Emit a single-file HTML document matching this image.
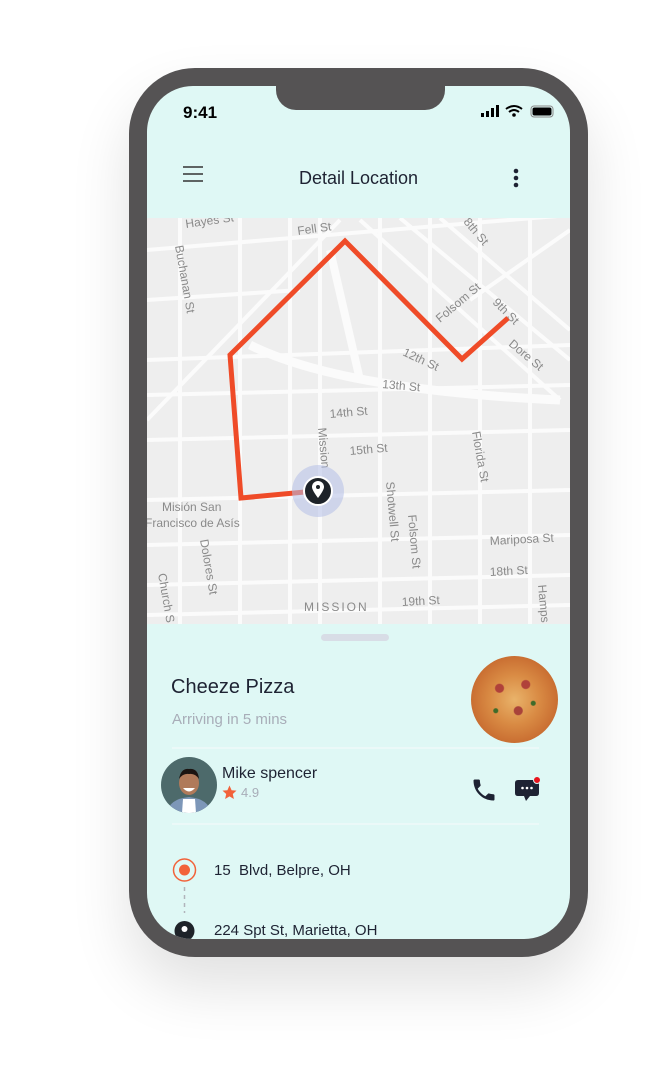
<!DOCTYPE html>
<html><head><meta charset="utf-8"><style>
*{margin:0;padding:0;box-sizing:border-box}
body{width:654px;height:1084px;background:#fff;position:relative;overflow:hidden;font-family:"Liberation Sans",sans-serif}
.phone{position:absolute;left:129px;top:68px;width:459px;height:889px;background:#555354;border-radius:66px;box-shadow:0 30px 60px rgba(0,0,0,0.12)}
.screen{position:absolute;left:147px;top:86px;width:423px;height:853px;background:#dff8f5;border-radius:46px;overflow:hidden}
.notch{position:absolute;left:129px;top:0;width:169px;height:24px;background:#555354;border-radius:0 0 20px 20px}
.t{position:absolute;white-space:nowrap;color:#1e2333}
</style></head><body>
<div class="phone"></div>
<div class="screen">
 <div class="notch"></div>
 <div class="t" style="left:36px;top:17px;font-weight:bold;font-size:17px;color:#000">9:41</div>
 <svg style="position:absolute;left:334px;top:18px" width="76" height="16">
  <rect x="0" y="9" width="3" height="4" fill="#000"/><rect x="5" y="7" width="3" height="6" fill="#000"/><rect x="10" y="4" width="3" height="9" fill="#000"/><rect x="15" y="1" width="3" height="12" fill="#000"/>
  <path d="M25 5 Q33 -1 41 5 M28 8 Q33 4 38 8" stroke="#000" stroke-width="2" fill="none"/><circle cx="33" cy="11" r="1.8" fill="#000"/>
  <rect x="50" y="2" width="22" height="11" rx="3" fill="none" stroke="#888" stroke-width="1"/><rect x="51.5" y="3.5" width="19" height="8" rx="2" fill="#000"/>
 </svg>
 <svg style="position:absolute;left:36px;top:80px" width="20" height="16"><path d="M0 1H20M0 8H20M0 15H20" stroke="#333" stroke-width="1.4"/></svg>
 <div class="t" style="left:0;width:423px;text-align:center;top:82px;font-size:18px">Detail Location</div>
 <svg style="position:absolute;left:364px;top:82px" width="10" height="22"><circle cx="5" cy="3" r="2.3" fill="#1e2333"/><circle cx="5" cy="10" r="2.3" fill="#1e2333"/><circle cx="5" cy="17" r="2.3" fill="#1e2333"/></svg>
 <svg style="position:absolute;left:0;top:132px" width="423" height="406" viewBox="147 218 423 406" font-family="Liberation Sans" font-size="12" fill="#8a8a8a">
  <rect x="147" y="218" width="423" height="406" fill="#eeeeee"/>
  <g stroke="#fbfbfb" stroke-width="4" fill="none">
   <path d="M147 250L570 215M147 300L300 290M147 360L570 345M147 395L570 385M147 440L570 430M147 500L570 490M147 545L570 535M147 585L570 575M147 615L570 605"/>
   <path d="M180 218V624M240 218V624M290 218V624M320 218V624M380 218V624M430 218V624M480 218V624M530 218V624"/>
   <path d="M400 218L570 360M440 218L570 330M360 220L560 400M147 420L340 220M470 300L570 230"/>
  </g>
  <path d="M250 345Q340 390 560 400" stroke="#fbfbfb" stroke-width="9" fill="none"/>
  <path d="M330 250L360 380" stroke="#fbfbfb" stroke-width="8" fill="none"/>
  <text x="186" y="228" transform="rotate(-8 186 228)">Hayes St</text>
  <text x="298" y="235" transform="rotate(-8 298 235)">Fell St</text>
  <text x="463" y="222" transform="rotate(50 463 222)">8th St</text>
  <text x="175" y="246" transform="rotate(80 175 246)">Buchanan St</text>
  <text x="440" y="323" transform="rotate(-40 440 323)">Folsom St</text>
  <text x="492" y="303" transform="rotate(45 492 303)">9th St</text>
  <text x="508" y="345" transform="rotate(40 508 345)">Dore St</text>
  <text x="402" y="355" transform="rotate(25 402 355)">12th St</text>
  <text x="382" y="388" transform="rotate(5 382 388)">13th St</text>
  <text x="330" y="418" transform="rotate(-5 330 418)">14th St</text>
  <text x="350" y="455" transform="rotate(-5 350 455)">15th St</text>
  <text x="318" y="428" transform="rotate(85 318 428)">Mission</text>
  <text x="472" y="432" transform="rotate(80 472 432)">Florida St</text>
  <text x="386" y="482" transform="rotate(85 386 482)">Shotwell St</text>
  <text x="408" y="515" transform="rotate(85 408 515)">Folsom St</text>
  <text x="162" y="511">Misión San</text>
  <text x="145" y="527">Francisco de Asís</text>
  <text x="200" y="540" transform="rotate(80 200 540)">Dolores St</text>
  <text x="158" y="574" transform="rotate(80 158 574)">Church S</text>
  <text x="490" y="545" transform="rotate(-3 490 545)">Mariposa St</text>
  <text x="490" y="576" transform="rotate(-3 490 576)">18th St</text>
  <text x="402" y="606" transform="rotate(-3 402 606)">19th St</text>
  <text x="538" y="585" transform="rotate(85 538 585)">Hamps</text>
  <text x="304" y="611" letter-spacing="2">MISSION</text>
  <path d="M305 492L241 498L230 355L345 241L462 359L508 318" stroke="#ef4b28" stroke-width="5" fill="none" stroke-linejoin="miter"/>
  <circle cx="318" cy="491" r="26" fill="#b5bfe8" opacity="0.55"/>
  <circle cx="318" cy="491" r="14" fill="#1e2329" stroke="#fff" stroke-width="2"/>
  <path d="M318 498Q312 490 312 487A6 6 0 0 1 324 487Q324 490 318 498Z" fill="#fff"/><circle cx="318" cy="487" r="2" fill="#1e2329"/>
 </svg>
 <div style="position:absolute;left:174px;top:548px;width:68px;height:7px;border-radius:4px;background:#d8dde6"></div>
 <div class="t" style="left:24px;top:590px;font-size:20px">Cheeze Pizza</div>
 <div class="t" style="left:25px;top:625px;font-size:15px;color:#a8adb8">Arriving in 5 mins</div>
 <div style="position:absolute;left:324px;top:570px;width:87px;height:87px;border-radius:50%;background:radial-gradient(circle at 50% 50%,#e9b36a 0,#d98b44 40%,#c76a2f 75%,#8a4a22 100%)"></div>
 <div style="position:absolute;left:330px;top:576px;width:75px;height:75px;border-radius:50%;background:radial-gradient(circle at 30% 35%,#b0413a 0 4px,transparent 5px),radial-gradient(circle at 65% 30%,#b0413a 0 4px,transparent 5px),radial-gradient(circle at 55% 65%,#a9433a 0 4px,transparent 5px),radial-gradient(circle at 25% 65%,#3f6b2a 0 2px,transparent 3px),radial-gradient(circle at 75% 55%,#3f6b2a 0 2px,transparent 3px)"></div>
 <div style="position:absolute;left:25px;top:661px;width:367px;height:2px;background:#ebf9f8"></div>
 <svg style="position:absolute;left:14px;top:671px" width="56" height="56"><defs><clipPath id="c"><circle cx="28" cy="28" r="28"/></clipPath></defs><g clip-path="url(#c)"><rect width="56" height="56" fill="#4d6a6b"/><path d="M6 56Q8 42 28 40Q48 42 50 56Z" fill="#7d97b8"/><path d="M21 56L22 42H34L35 56Z" fill="#fff"/><ellipse cx="28" cy="26" rx="10" ry="12" fill="#b07a5a"/><path d="M18 22Q20 11 28 12Q37 11 38 22Q34 16 28 17Q22 16 18 22Z" fill="#1b1411"/><path d="M22 31Q28 38 34 31" fill="#fff"/></g></svg>
 <div class="t" style="left:75px;top:679px;font-size:16px">Mike spencer</div>
 <svg style="position:absolute;left:75px;top:699px" width="15" height="15"><path d="M7.5 0.5L9.6 5.2L14.5 5.6L10.8 9L11.9 14L7.5 11.4L3.1 14L4.2 9L0.5 5.6L5.4 5.2Z" fill="#f2623a"/></svg>
 <div class="t" style="left:94px;top:699px;font-size:13px;color:#a8adb8">4.9</div>
 <svg style="position:absolute;left:323px;top:690px" width="28" height="28" viewBox="0 0 24 24"><path d="M6.6 10.8c1.4 2.8 3.8 5.1 6.6 6.6l2.2-2.2c.3-.3.7-.4 1-.2 1.1.4 2.3.6 3.6.6.6 0 1 .4 1 1V20c0 .6-.4 1-1 1C10.6 21 3 13.4 3 4c0-.6.4-1 1-1h3.5c.6 0 1 .4 1 1 0 1.3.2 2.5.6 3.6.1.3 0 .7-.2 1z" fill="#1e2333"/></svg>
 <svg style="position:absolute;left:367px;top:688px" width="28" height="30"><path d="M4 6H22Q25 6 25 9V19Q25 22 22 22H16L12 27L10 22H4Q1 22 1 19V9Q1 6 4 6Z" fill="#1e2333"/><circle cx="8.5" cy="14" r="1.3" fill="#fff"/><circle cx="13" cy="14" r="1.3" fill="#fff"/><circle cx="17.5" cy="14" r="1.3" fill="#fff"/><circle cx="23" cy="6" r="3.5" fill="#e8141c" stroke="#dff8f5" stroke-width="1"/></svg>
 <div style="position:absolute;left:25px;top:737px;width:367px;height:2px;background:#ebf9f8"></div>
 <svg style="position:absolute;left:25px;top:771px" width="26" height="90"><circle cx="12.5" cy="13" r="11" fill="none" stroke="#f2623a" stroke-width="1.5"/><circle cx="12.5" cy="13" r="5.5" fill="#f2623a"/><path d="M12.5 30V56" stroke="#b0b4bb" stroke-width="1.5" stroke-dasharray="4 4"/><circle cx="12.5" cy="74" r="10" fill="#1e2329"/><circle cx="12.5" cy="72" r="3" fill="#fff"/></svg>
 <div class="t" style="left:67px;top:776px;font-size:15px">15&nbsp; Blvd, Belpre, OH</div>
 <div class="t" style="left:67px;top:836px;font-size:15px">224 Spt St, Marietta, OH</div>
</div>
</body></html>
